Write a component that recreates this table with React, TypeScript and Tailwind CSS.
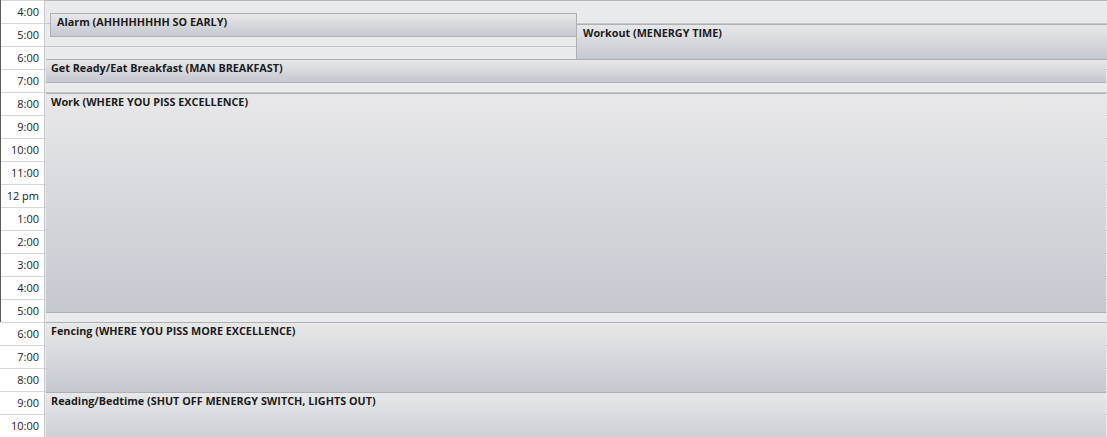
import React from "react";

const labels = [
  "4:00", "5:00", "6:00", "7:00", "8:00", "9:00", "10:00", "11:00", "12 pm",
  "1:00", "2:00", "3:00", "4:00", "5:00", "6:00", "7:00", "8:00", "9:00", "10:00",
];

type Ev = { title: string; top: number; height: number; left: number; width: number; pl: number; cls?: string };

const events: Ev[] = [
  { title: "Alarm (AHHHHHHHH SO EARLY)", top: 13, height: 24, left: 5, width: 527, pl: 6, cls: "border-l border-r" },
  { title: "Workout (MENERGY TIME)", top: 24, height: 36, left: 531, width: 531, pl: 6, cls: "border-l" },
  { title: "Get Ready/Eat Breakfast (MAN BREAKFAST)", top: 59, height: 24, left: 1, width: 1060, pl: 5 },
  { title: "Work (WHERE YOU PISS EXCELLENCE)", top: 93, height: 220, left: 1, width: 1060, pl: 5 },
  { title: "Fencing (WHERE YOU PISS MORE EXCELLENCE)", top: 322, height: 71, left: 1, width: 1060, pl: 5 },
  { title: "Reading/Bedtime (SHUT OFF MENERGY SWITCH, LIGHTS OUT)", top: 392, height: 60, left: 1, width: 1060, pl: 5 },
];

export default function App() {
  return (
    <div
      className="flex w-[1107px] h-[437px] overflow-hidden bg-white"
      style={{ fontFamily: '"Open Sans", "Noto Sans", "Liberation Sans", sans-serif' }}
    >
      <div className="w-[45px] shrink-0 border-r border-[#c8cacf] bg-white">
        <div className="border-l border-[#5c5c5c]">
          {labels.slice(0, 14).map((l, i) => (
            <div
              key={i}
              className="h-[23px] border-t border-[#d6d7da] text-right pr-[5px] text-[11px] leading-[22px] text-[#222]"
            >
              {l}
            </div>
          ))}
        </div>
        {labels.slice(14).map((l, i) => (
          <div
            key={i}
            className="h-[23px] border-t border-[#d6d7da] text-right pr-[5px] text-[11px] leading-[22px] text-[#222]"
          >
            {l}
          </div>
        ))}
      </div>
      <div className="relative flex-1 bg-[#e9eaeb]">
        {labels.map((_, i) => (
          <div key={i} className={`h-[23px] border-t ${i === 0 ? "border-[#b4b7bd]" : "border-[#c4c6ca]"}`} />
        ))}
        {events.map((e, i) => (
          <div
            key={i}
            className={`absolute border-t border-b border-[#adb0b6] bg-gradient-to-b from-[#e8e8e9] to-[#c5c8cf] ${e.cls ?? ""}`}
            style={{ top: e.top, height: e.height, left: e.left, width: e.width, paddingLeft: e.pl }}
          >
            <div className="text-[10.8px] font-bold leading-[14px] pt-[1px] text-[#1c1c1c] whitespace-nowrap">
              {e.title}
            </div>
          </div>
        ))}
      </div>
    </div>
  );
}
